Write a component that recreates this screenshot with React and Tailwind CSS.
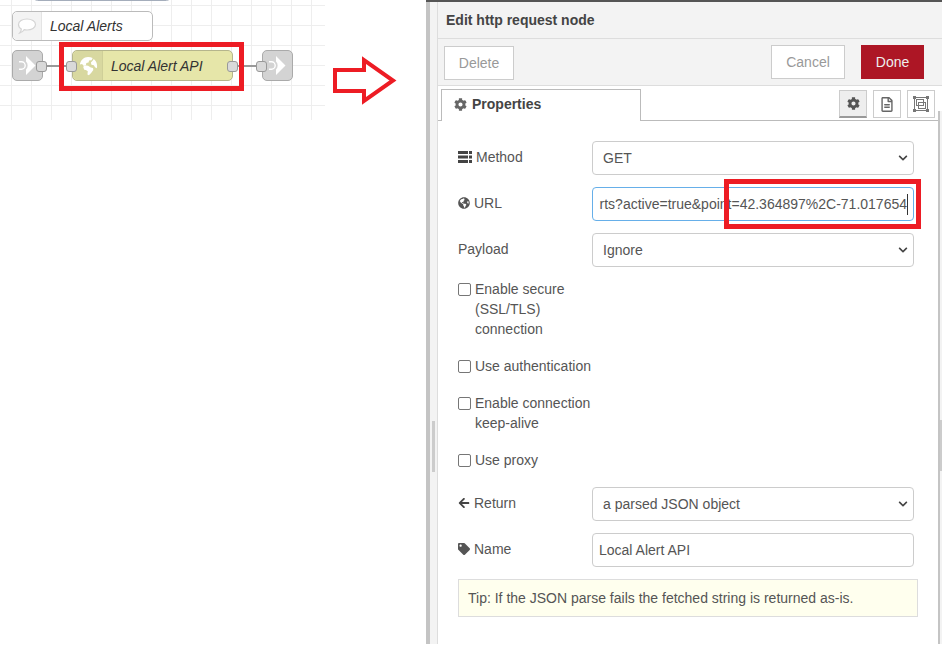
import { FaCog, FaGlobeAmericas, FaArrowLeft, FaTag, FaRegFileAlt, FaChevronDown } from "react-icons/fa";

const canvasGrid =
  "bg-[linear-gradient(#eeeeee_1px,transparent_1px),linear-gradient(90deg,#eeeeee_1px,transparent_1px)] bg-[size:20px_20px] bg-[position:11px_5px]";

const Port = ({ className }) => (
  <div className={`absolute w-[11px] h-[11px] rounded-[3px] bg-[#d9d9d9] border border-[#999999] ${className}`}></div>
);

const LinkIcon = () => (
  <svg width="17" height="21" viewBox="0 0 17 21">
    <path d="M7 1l9.500 9.500L7 20v-5.500c2.200-2.200 2.200-5.800 0-8z" fill="#ffffff" />
    <path d="M0 6.800h2.500a3.700 3.700 0 0 1 0 7.400H0" fill="none" stroke="#ffffff" strokeWidth="1.400" />
  </svg>
);

const LinkNode = ({ className }) => (
  <div className={`absolute w-[31px] h-[31px] rounded-[5px] bg-[#d3d3d3] border border-[#aaaaaa] flex items-center justify-center ${className}`}>
    <LinkIcon />
  </div>
);

const MethodIcon = () => (
  <svg width="14" height="12" viewBox="0 0 14 12" fill="#444444">
    <path d="M0 0h10v3H0zM11 0h3v3h-3zM0 4.500h10v3H0zM11 4.500h3v3h-3zM0 9h10v3H0zM11 9h3v3h-3z" />
  </svg>
);

const Row = ({ icon, label, children, className }) => (
  <div className={`flex items-center h-[34px] ${className}`}>
    <label className="w-[134px] flex items-center gap-[4px] text-[14px] text-[#555555] -mt-[2px]">
      {icon}
      {label}
    </label>
    {children}
  </div>
);

const Select = ({ value }) => (
  <div className="w-[322px] h-[34px] rounded-[4px] border border-[#cccccc] bg-white flex items-center justify-between pl-[10px] pr-[5px] text-[14px] text-[#555555]">
    <span>{value}</span>
    <FaChevronDown className="w-[10px] h-[10px] text-[#444444]" />
  </div>
);

const Check = ({ lines, className }) => (
  <div className={`flex items-start gap-[4px] text-[14px] leading-[20px] text-[#555555] ${className}`}>
    <div className="w-[13px] h-[13px] mt-[4px] rounded-[2px] border border-[#767676] bg-white"></div>
    <div>
      {lines.map((line) => (
        <div key={line}>{line}</div>
      ))}
    </div>
  </div>
);

const App = () => {
  return (
    <div className="flex w-[942px] h-[647px] bg-white overflow-hidden font-['Liberation_Sans',Arial,sans-serif]">
      {/* Flow canvas */}
      <div className="relative w-[426px] h-full shrink-0">
        <div className={`absolute left-0 top-0 w-[325px] h-[120px] ${canvasGrid}`}></div>
        <div className="absolute left-[33px] -top-[8px] w-[138px] h-[9px] rounded-[5px] bg-white border border-[#a4adbb]"></div>

        <div className="absolute left-[12px] top-[11px] w-[141px] h-[30px] rounded-[5px] bg-white border border-[#bbbbbb] flex items-center">
          <div className="w-[29px] h-full rounded-l-[5px] bg-[#f3f3f3] border-r border-[#e4e4e4] flex items-center justify-center">
            <svg width="20" height="18" viewBox="0 0 20 18" fill="#ffffff" stroke="#d4d4d4" strokeWidth="1.2">
              <path d="M10 2c4.700 0 8.500 2.400 8.500 5.500S14.700 13 10 13c-1 0-2-.1-2.900-.3C6 14.500 4.500 15.500 2.800 16c.9-1 1.400-2.200 1.500-3.900C2.600 11.100 1.500 9.400 1.500 7.500 1.500 4.400 5.300 2 10 2z" />
            </svg>
          </div>
          <span className="ml-[8px] text-[14px] italic text-[#333333]">Local Alerts</span>
        </div>

        <div className="absolute left-[44px] top-[65px] w-[220px] h-[2px] bg-[#999999]"></div>
        <LinkNode className="left-[12px] top-[50px]" />
        <Port className="left-[36px] top-[61px]" />
        <LinkNode className="left-[262px] top-[50px]" />
        <Port className="left-[256px] top-[61px]" />

        <div className="absolute left-[72px] top-[50px] w-[161px] h-[31px] rounded-[5px] bg-[#e6e6a9] border border-[#b5b58c] flex items-center">
          <div className="w-[30px] h-full rounded-l-[5px] bg-[#d8d8a0] border-r border-[#cfcf98] flex items-center justify-center">
            <svg width="20" height="20" viewBox="0 0 18 18" fill="#ffffff">
              <path d="M9 .8c1.600 0 3 .4 4.200 1.100l-1 2-2.200.2-.5 1.800-2 .4-.3 1.700-2.300.7-1.200-1.400-2 .3C2.300 3.700 5.200.8 9 .8z" />
              <path d="M14.200 2.700c1.900 1.500 3 3.700 3 6.300 0 .8-.1 1.500-.3 2.100l-1.600-.9-1-1.900-2.200-.5-.5-2 1.500-1.500z" />
              <path d="M5.800 8.400l3.300.3 2.400 1.700 2 .3.300 1.800-2 2.800-2 2-1.300-.6.300-2.900-1.700-1.300-1.500-.2-.9-2.400z" />
            </svg>
          </div>
          <span className="ml-[8px] mt-[1px] text-[14px] italic text-[#333333]">Local Alert API</span>
        </div>
        <Port className="left-[66px] top-[61px]" />
        <Port className="left-[227px] top-[61px]" />

        <div className="absolute left-[59px] top-[42px] w-[185px] h-[49px] border-[5px] border-[#ed1c24]"></div>

        <svg className="absolute left-[331px] top-[55px]" width="68" height="51" viewBox="0 0 68 51">
          <path d="M4 15H33V5L62 25.500 33 46V36H4Z" fill="#ffffff" stroke="#ed1c24" strokeWidth="4" />
        </svg>
      </div>

      {/* Edit tray */}
      <div className="flex-1 flex flex-col min-w-0 h-[644px]">
        <div className="h-[2px] bg-[#555555] shrink-0"></div>
        <div className="flex flex-1 min-h-0">
          <div className="w-[4px] bg-[#c4c4c4] shrink-0"></div>
          <div className="relative w-[8px] bg-[#f3f3f3] border-r border-[#dddddd] shrink-0">
            <div className="absolute left-[2px] top-[419px] w-[3px] h-[51px] bg-[#cccccc]"></div>
          </div>
          <div className="flex-1 flex flex-col min-w-0">
            <div className="h-[36px] bg-[#f3f3f3] border-b border-[#dddddd] flex items-center pl-[8px] text-[14px] font-bold text-[#444444] shrink-0 box-content">
              Edit http request node
            </div>
            <div className="h-[46px] bg-[#f3f3f3] border-b border-[#dddddd] flex items-start justify-between pl-[6px] pr-[18px] shrink-0 box-content">
              <button className="mt-[7px] w-[70px] h-[34px] bg-white border border-[#cccccc] text-[14px] text-[#999999]">Delete</button>
              <div className="flex gap-[16px] mt-[6px]">
                <button className="w-[74px] h-[34px] bg-white border border-[#cccccc] text-[14px] text-[#999999]">Cancel</button>
                <button className="w-[63px] h-[34px] bg-[#ad1625] text-[14px] text-[#eeeeee]">Done</button>
              </div>
            </div>

            <div className="h-[34px] flex items-end justify-between border-b border-[#bbbbbb] shrink-0 box-content">
              <div className="ml-[3px] w-[200px] h-[32px] -mb-[1px] bg-white border border-b-0 border-[#bbbbbb] flex items-center gap-[5px] pl-[12px] pb-[2px] text-[14px] font-bold text-[#444444]">
                <FaCog className="w-[13px] h-[13px] text-[#666666]" />
                Properties
              </div>
              <div className="flex gap-[6px] pr-[7px] pb-[2px]">
                <div className="w-[28px] h-[28px] bg-[#eeeeee] border border-[#cccccc] border-b-2 border-b-[#999999] flex items-center justify-center">
                  <FaCog className="w-[13px] h-[13px] text-[#555555]" />
                </div>
                <div className="w-[28px] h-[28px] bg-white border border-[#cccccc] flex items-center justify-center">
                  <FaRegFileAlt className="w-[12px] h-[15px] text-[#666666]" />
                </div>
                <div className="w-[28px] h-[28px] bg-white border border-[#cccccc] flex items-center justify-center">
                  <svg width="16" height="16" viewBox="0 0 16 16" fill="none" stroke="#777777">
                    <rect x="1.500" y="1.500" width="13" height="13" />
                    <rect x="3.500" y="3.500" width="7" height="6" />
                    <rect x="5.500" y="6.500" width="7" height="6" />
                    <path d="M0 0h3v3H0zM13 0h3v3h-3zM0 13h3v3H0zM13 13h3v3h-3z" fill="#777777" stroke="none" />
                  </svg>
                </div>
              </div>
            </div>

            <div className="flex-1 bg-white pl-[20px] pt-[20px] relative">
              <Row icon={<MethodIcon />} label="Method">
                <Select value="GET" />
              </Row>
              <Row className="mt-[12px]" icon={<FaGlobeAmericas className="w-[12px] h-[12px] text-[#555555]" />} label="URL">
                <div className="w-[322px] h-[34px] rounded-[4px] border border-[#66afe9] bg-white overflow-hidden flex items-center justify-end pr-[5px] text-[14px] text-[#555555] whitespace-nowrap">
                  <span className="border-r border-[#333333]">rts?active=true&amp;point=42.364897%2C-71.017654</span>
                </div>
              </Row>
              <Row className="mt-[12px]" label="Payload">
                <Select value="Ignore" />
              </Row>

              <Check className="mt-[12px]" lines={["Enable secure", "(SSL/TLS)", "connection"]} />
              <Check className="mt-[17px]" lines={["Use authentication"]} />
              <Check className="mt-[17px]" lines={["Enable connection", "keep-alive"]} />
              <Check className="mt-[17px]" lines={["Use proxy"]} />

              <Row className="mt-[17px]" icon={<FaArrowLeft className="w-[12px] h-[12px] text-[#444444]" />} label="Return">
                <Select value="a parsed JSON object" />
              </Row>
              <Row className="mt-[12px]" icon={<FaTag className="w-[12px] h-[12px] text-[#555555]" />} label="Name">
                <div className="w-[322px] h-[34px] rounded-[4px] border border-[#cccccc] bg-white flex items-center pl-[6px] text-[14px] text-[#555555]">
                  Local Alert API
                </div>
              </Row>
              <div className="mt-[12px] w-[460px] h-[38px] bg-[#ffffee] border border-[#dddddd] flex items-center pl-[9px] text-[14px] text-[#555555]">
                Tip: If the JSON parse fails the fetched string is returned as-is.
              </div>

              {/* annotation over the URL field */}
              <div className="absolute left-[286px] top-[58px] w-[197px] h-[50px] border-[5px] border-[#ed1c24]"></div>

              {/* right hand resize handle */}
              <div className="absolute right-0 -top-[10px] bottom-0 w-[4px] border-l-2 border-[#c4c4c4] bg-[#f3f3f3]">
                <div className="absolute right-0 top-[309px] w-[2px] h-[51px] bg-[#cccccc]"></div>
              </div>
            </div>
          </div>
        </div>
      </div>
    </div>
  );
};

export default App;
